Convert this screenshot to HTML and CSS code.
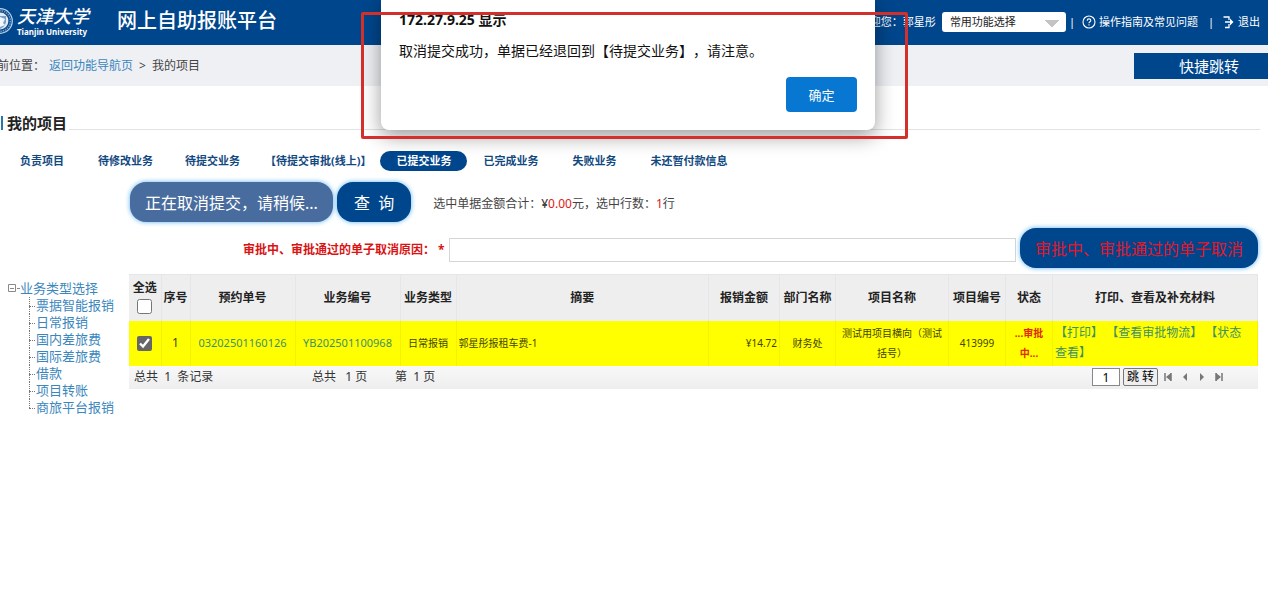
FILE: index.html
```html
<!DOCTYPE html>
<html lang="zh-CN">
<head>
<meta charset="utf-8">
<title>网上自助报账平台</title>
<link rel="stylesheet" href="styles.css">
</head>
<body>
<header class="topbar">
  <div class="brand">
    <svg class="crest" viewBox="0 0 26 30" aria-hidden="true">
      <circle cx="13" cy="15" r="12.3" fill="#0b4a8c" stroke="#b9d3ea" stroke-width="1.2"/>
      <circle cx="13" cy="15" r="10.4" fill="none" stroke="#6f9bc8" stroke-width="1.6" stroke-dasharray="1.4 1"/>
      <circle cx="13" cy="15" r="8.4" fill="#dfeaf5"/>
      <path d="M8 10h11v6q-1 5-6 7-5-2-5-7z" fill="#7b9fc4"/>
      <path d="M13 11l5 2-2 4 2 2-5 2z" fill="#f3f6fa"/>
    </svg>
    <div class="school">
      <span class="school-cn">天津大学</span>
      <span class="school-en">Tianjin University</span>
    </div>
    <h1 class="platform">网上自助报账平台</h1>
  </div>
  <div class="tools">
    <span class="welcome">欢迎您：郭星彤</span>
    <select class="quick" aria-label="常用功能选择"><option>常用功能选择</option></select>
    <span class="bar">|</span>
    <a class="tool" href="#"><svg class="ic" viewBox="0 0 14 14" aria-hidden="true"><circle cx="7" cy="7" r="6" fill="none" stroke="#fff" stroke-width="1.1"/><path d="M5.2 5.8q0-1.900 1.800-1.900t1.800 1.600q0 .8-.9 1.300-.9.500-.9 1.400M7 9.300v1.200" fill="none" stroke="#fff" stroke-width="1.1"/></svg>操作指南及常见问题</a>
    <span class="bar gap">|</span>
    <a class="tool" href="#"><svg class="ic" viewBox="0 0 14 14" aria-hidden="true"><path d="M2.500 2h5.500v3M8 9v3.500H4" fill="none" stroke="#fff" stroke-width="1.3"/><path d="M4 6.200h5V3.600L12.500 7 9 10.400V7.800H4z" fill="#fff"/></svg>退出</a>
  </div>
</header>
<nav class="crumbs">
  <div class="trail"><span>当前位置：</span><a href="#">返回功能导航页</a><span class="sep">&gt;</span><span>我的项目</span></div>
  <button class="jump" type="button">快捷跳转</button>
</nav>
<main>
  <h2 class="title"><span>我的项目</span></h2>
  <nav class="tabs">
    <a href="#">负责项目</a><a href="#">待修改业务</a><a href="#">待提交业务</a><a class="online" href="#">【待提交审批(线上)】</a><a class="on" href="#">已提交业务</a><a href="#">已完成业务</a><a href="#">失败业务</a><a href="#">未还暂付款信息</a>
  </nav>
  <div class="body">
    <aside class="tree">
      <div class="root"><svg class="box" viewBox="0 0 12 9" aria-hidden="true"><path d="M.5.5h7v7h-7zM2 4.500h4M9 4.500h3" fill="none" stroke="#888"/></svg><a href="#">业务类型选择</a></div>
      <ul>
        <li><a href="#">票据智能报销</a></li>
        <li><a href="#">日常报销</a></li>
        <li><a href="#">国内差旅费</a></li>
        <li><a href="#">国际差旅费</a></li>
        <li><a href="#">借款</a></li>
        <li><a href="#">项目转账</a></li>
        <li><a href="#">商旅平台报销</a></li>
      </ul>
    </aside>
    <section class="content">
      <div class="actions">
        <button class="pill busy" type="button">正在取消提交，请稍候...</button>
        <button class="pill query" type="button">查&nbsp; 询</button>
        <p class="sum">选中单据金额合计：<b>¥</b><em>0.00</em>元，选中行数：<em>1</em>行</p>
      </div>
      <div class="reason">
        <label for="reason">审批中、审批通过的单子取消原因： *</label>
        <input id="reason" type="text">
        <button class="pill cancel" type="button">审批中、审批通过的单子取消</button>
      </div>
      <table class="grid">
        <colgroup><col class="w-check"><col class="w-no"><col class="w-id"><col class="w-id"><col class="w-type"><col><col class="w-money"><col class="w-type"><col class="w-name"><col class="w-code"><col class="w-state"><col class="w-ops"></colgroup>
        <thead>
          <tr><th><label class="all">全选<input type="checkbox"></label></th><th>序号</th><th>预约单号</th><th>业务编号</th><th>业务类型</th><th>摘要</th><th>报销金额</th><th>部门名称</th><th>项目名称</th><th>项目编号</th><th>状态</th><th>打印、查看及补充材料</th></tr>
        </thead>
        <tbody>
          <tr><td><input type="checkbox" checked aria-label="选择第1行"></td><td class="no">1</td><td class="id"><a href="#">03202501160126</a></td><td class="id"><a href="#">YB202501100968</a></td><td>日常报销</td><td class="left">郭星彤报租车费-1</td><td class="right">¥14.72</td><td>财务处</td><td class="name">测试用项目横向（测试括号）</td><td>413999</td><td class="state">...审批中...</td><td class="ops"><a href="#">【打印】</a> <a href="#">【查看审批物流】</a> <a href="#">【状态查看】</a></td></tr>
        </tbody>
      </table>
      <div class="pager">
        <span class="total">总共&nbsp; 1&nbsp; 条记录</span>
        <span class="pages">总共&nbsp;&nbsp; 1 页</span>
        <span>第&nbsp; 1 页</span>
        <div class="go">
          <input type="text" value="1" aria-label="页码"><button class="jumpto" type="button">跳 转</button>
          <button class="step" type="button" aria-label="首页"><svg viewBox="0 0 8 8"><path d="M1 0v8M7 0v8" stroke="#777" stroke-width="1.500"/><path d="M7 0v8L2 4z" fill="#777"/></svg></button>
          <button class="step" type="button" aria-label="上一页"><svg viewBox="0 0 8 8"><path d="M6 0v8L2 4z" fill="#777"/></svg></button>
          <button class="step" type="button" aria-label="下一页"><svg viewBox="0 0 8 8"><path d="M2 0v8l4-4z" fill="#777"/></svg></button>
          <button class="step" type="button" aria-label="末页"><svg viewBox="0 0 8 8"><path d="M7 0v8M1 0v8" stroke="#777" stroke-width="1.500"/><path d="M1 0v8l5-4z" fill="#777"/></svg></button>
        </div>
      </div>
    </section>
  </div>
</main>
<div class="dialog" role="alertdialog" aria-labelledby="dlg-title" aria-describedby="dlg-text">
  <h3 id="dlg-title">172.27.9.25 显示</h3>
  <p id="dlg-text">取消提交成功，单据已经退回到【待提交业务】，请注意。</p>
  <button type="button">确定</button>
</div>
<div class="marker"></div>
</body>
</html>
```
FILE: styles.css
```css
* { box-sizing: border-box; }
body {
  margin: 0;
  position: relative;
  overflow-x: hidden;
  background: #fff;
  color: #333;
  font: 12px/20px "Noto Sans", "Noto Sans CJK SC", sans-serif;
  text-spacing-trim: space-all;
}
h1, h2, h3, p, ul { margin: 0; padding: 0; }
a { color: #3b87bd; text-decoration: none; }
button, input, select { font-family: inherit; }

.topbar {
  display: flex;
  justify-content: space-between;
  height: 45px;
  background: #00468c;
  color: #fff;
}
.brand { display: flex; align-items: center; padding-bottom: 4px; }
.crest { width: 26px; height: 30px; margin-left: -13px; }
.school { display: flex; flex-direction: column; width: 73px; margin-left: 4px; }
.school-cn { font-size: 18px; line-height: 22px; font-style: italic; font-weight: 500; white-space: nowrap; }
.school-en { font-size: 8px; line-height: 10px; font-weight: 700; white-space: nowrap; }
.platform { margin-left: 27px; font-size: 20px; line-height: 30px; font-weight: 500; white-space: nowrap; }
.tools {
  display: flex;
  align-items: center;
  padding: 0 8px 2px 0;
  font-size: 11px;
  white-space: nowrap;
}
.quick {
  width: 124px;
  height: 20px;
  margin: 0 3px 0 6px;
  padding: 0 8px;
  border: 0;
  border-radius: 3px;
  appearance: none;
  color: #222;
  font-size: 11px;
  background:
    linear-gradient(45deg, transparent 50%, #c4c4c4 50%) right 14px top 8px / 7px 7px no-repeat,
    linear-gradient(135deg, #c4c4c4 50%, transparent 50%) right 7px top 8px / 7px 7px no-repeat,
    #fff;
}
.tool { display: flex; align-items: center; gap: 3px; color: #fff; }
.bar { margin-right: 7px; }
.bar.gap { margin: 0 7px 0 10px; }
.ic { width: 14px; height: 14px; }

.crumbs {
  display: flex;
  justify-content: space-between;
  align-items: center;
  height: 41px;
  background: #eff0f4;
}
.trail { display: flex; margin-left: -15px; color: #444; }
.trail a { margin-left: 4px; }
.sep { margin: 0 6px; }
.jump {
  width: 134px;
  height: 26px;
  padding: 0 0 0 16px;
  border: 0;
  background: #00468c;
  color: #fff;
  font-size: 15px;
}

.title {
  margin: 24px 8px 0 1px;
  height: 20px;
  border-bottom: 1px solid #e2e2e2;
  font-size: 15px;
  line-height: 26px;
  color: #222;
}
.title span { display: inline-block; padding: 0 2px 0 4px; border-left: 2px solid #2b78a8; line-height: 14px; background: #fff; }
.tabs { display: flex; align-items: center; height: 22px; margin: 20px 0 0 2px; }
.tabs a { flex: none; min-width: 80px; padding: 0 16px; border-radius: 10px; color: #12497f; font-size: 11px; font-weight: 700; text-align: center; }
.tabs .online { padding: 0 9px; }
.tabs .on { background: #00468c; color: #fff; }

.body { display: grid; grid-template-columns: 129px minmax(0, 1fr); padding-right: 10px; }
.tree { padding: 108px 0 0 8px; font-size: 13px; line-height: 17px; white-space: nowrap; }
.root { display: flex; align-items: center; }
.box { width: 12px; height: 9px; }
.tree ul { list-style: none; margin-left: 21px; }
.tree li { position: relative; padding-left: 7px; }
.tree li::before, .tree li::after { content: ""; position: absolute; left: 0; top: 0; }
.tree li::before { height: 100%; border-left: 1px dotted #777; }
.tree li:last-child::before { height: 50%; }
.tree li::after { top: 50%; width: 6px; border-top: 1px dotted #777; }

.actions { display: flex; align-items: center; gap: 4px; padding: 10px 0 0 1px; }
.pill {
  flex: none;
  height: 40px;
  padding: 0 15px;
  border: 0;
  border-radius: 16px;
  background: #00468c;
  color: #fff;
  font-size: 16px;
  box-shadow: 0 0 5px #5cb2f0;
}
.busy { background: #486c9e; }
.query { padding: 0 17px; }
.sum { margin-left: 18px; padding-top: 3px; color: #444; }
.sum em { color: #e01818; font-style: normal; }
.sum b { font-weight: 500; }
.reason { display: flex; align-items: center; gap: 4px; padding: 6px 0; }
.reason label { padding: 3px 0 0 114px; flex: none; color: #d81414; font-weight: 700; }
.reason input { flex: 1; min-width: 0; height: 24px; margin-top: 3px; border: 1px solid #d5d5d5; }
.cancel { color: #e0182d; }

.grid { width: 100%; table-layout: fixed; border-collapse: collapse; }
.grid th { height: 46px; padding: 0; border: 1px solid #e6e6ea; border-width: 1px 1px 0 0; background: #eee; color: #222; white-space: nowrap; }
.grid td { height: 45px; padding: 0 2px; border-right: 1px solid #f3f300; background: #ff0; text-align: center; font-size: 10px; color: #444400; }
.w-check { width: 32px; }
.w-no { width: 29px; }
.w-id { width: 105px; }
.w-type { width: 56px; }
.w-money { width: 71px; }
.w-name { width: 113px; }
.w-code { width: 57px; }
.w-state { width: 47px; }
.w-ops { width: 205px; }
.all { display: flex; flex-direction: column; align-items: center; line-height: 18px; }
.grid input { width: 15px; height: 15px; margin: 2px; vertical-align: middle; accent-color: #666; }
.grid td.no { font-size: 12px; }
.grid td.id { font-size: 11px; }
.grid td.id a, .grid td.ops a { color: #3f9060; }
.grid td.left { text-align: left; }
.grid td.right { text-align: right; }
.grid td.state { padding: 0 8px; color: #e02a00; font-weight: 700; }
.grid td.ops { padding-right: 10px; text-align: left; font-size: 12px; }
.pager { display: flex; align-items: center; height: 23px; padding-left: 5px; background: linear-gradient(#f8f8f8, #eee); }
.total { width: 178px; }
.pages { width: 83px; }
.go { display: flex; align-items: center; gap: 3px; margin-left: auto; padding-right: 32px; }
.go input { width: 28px; height: 18px; padding: 0; border: 1px solid #888; text-align: center; font-size: 12px; }
.jumpto { height: 18px; padding: 0 3px; border: 1px solid #777; border-radius: 2px; background: #efefef; font-size: 12px; line-height: 16px; }
.step { width: 14px; height: 16px; padding: 0 3px; border: 0; background: none; }
.step svg { display: block; width: 8px; height: 8px; }

.dialog {
  position: absolute;
  top: 0;
  left: calc(50% - 253px);
  width: 494px;
  padding: 10px 18px 18px;
  display: flex;
  flex-direction: column;
  border-radius: 0 0 8px 8px;
  background: #fff;
  color: #111;
  font-size: 14px;
  box-shadow: 0 6px 20px rgba(0, 0, 0, .4);
}
.dialog h3 { font-size: 14px; line-height: 20px; }
.dialog p { margin-top: 11px; }
.dialog button { align-self: flex-end; width: 71px; height: 35px; margin-top: 16px; border: 0; border-radius: 4px; background: #0877d2; color: #fff; font-size: 13px; }
.marker { position: absolute; top: 12px; left: calc(50% - 273px); width: 547px; height: 127px; border: 3px solid #d3302c; border-radius: 2px; pointer-events: none; }
```
